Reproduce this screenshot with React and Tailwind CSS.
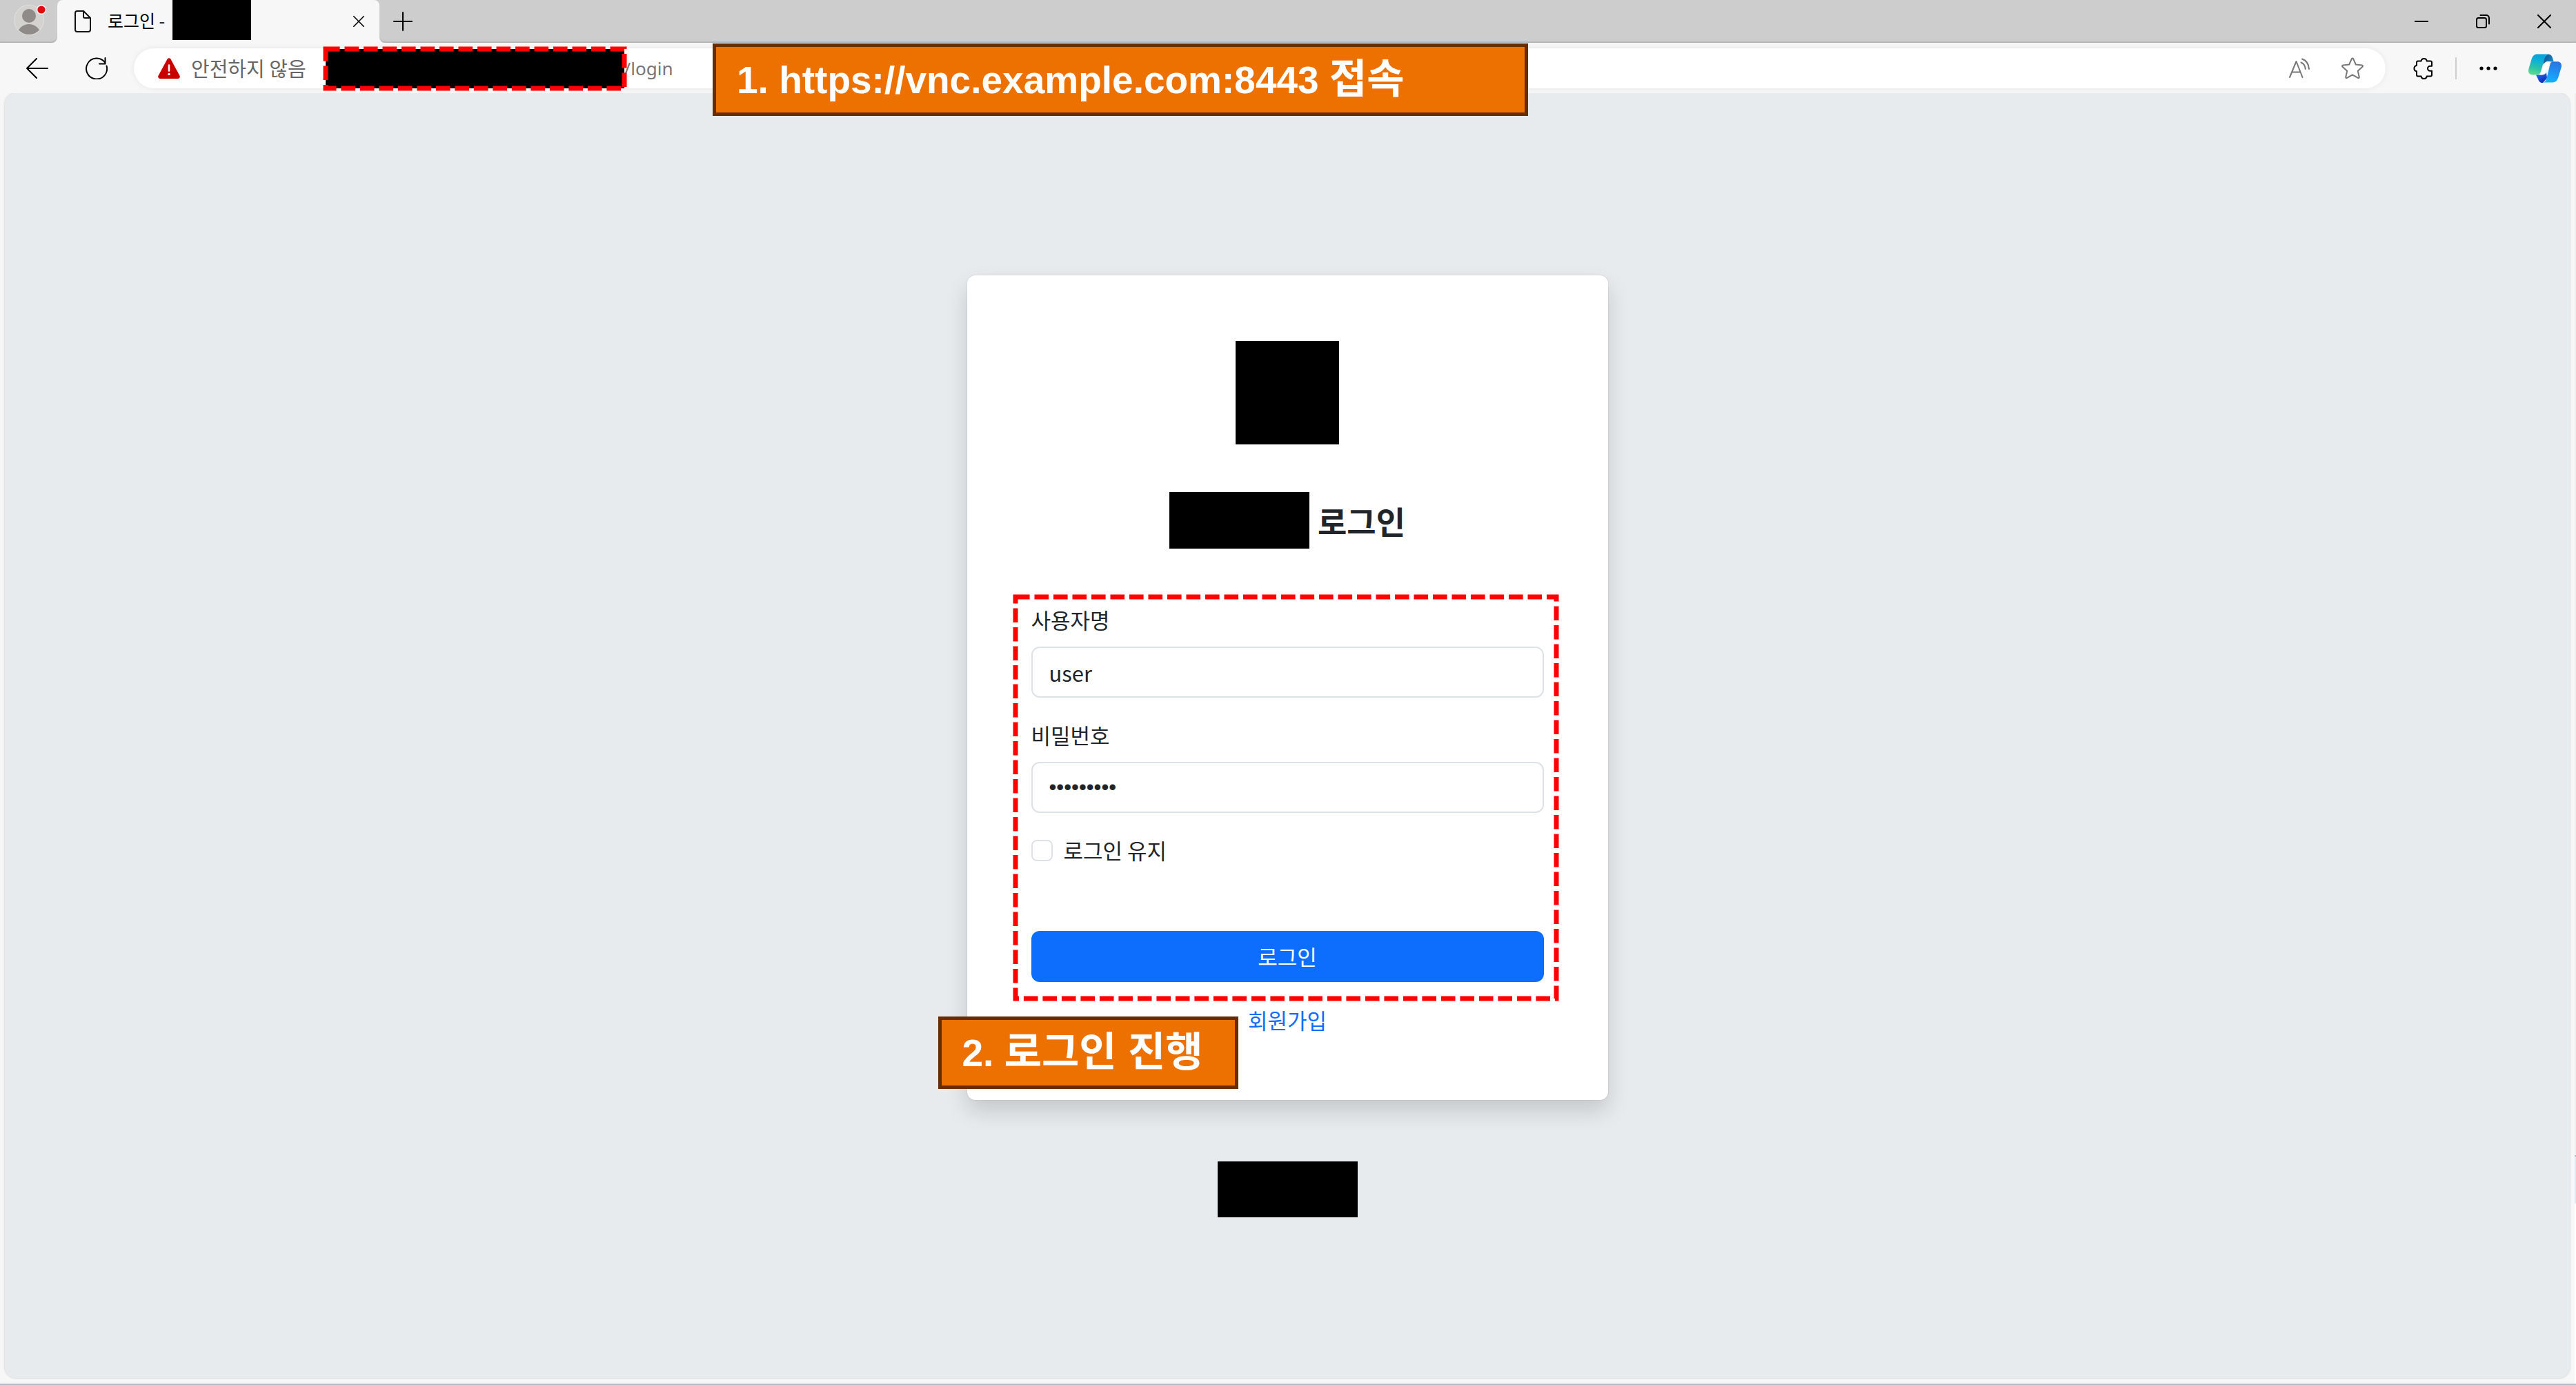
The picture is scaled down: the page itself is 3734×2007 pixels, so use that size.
import React from "react";

function Dashes() {
  return (
    <svg aria-hidden="true" className="pointer-events-none absolute inset-0 h-full w-full overflow-visible">
      <rect width="100%" height="100%" fill="none" stroke="#ff0000" strokeWidth="7" strokeDasharray="20.6 6.9" />
    </svg>
  );
}

function Callout({ className, children }) {
  return (
    <div
      className={
        "absolute z-10 flex h-[105px] items-center border-[5px] border-[#662d00] bg-[#ed7100] pl-[30px] font-['Liberation_Sans','Noto_Sans_CJK_KR',sans-serif] text-[55px] leading-none font-bold whitespace-nowrap text-white " +
        className
      }
    >
      <p>{children}</p>
    </div>
  );
}

function Profile() {
  return (
    <svg viewBox="0 0 48 48" className="size-12">
      <defs>
        <clipPath id="face"><circle cx="22" cy="26" r="21" /></clipPath>
      </defs>
      <circle cx="22" cy="26" r="21.5" fill="#d3d2ce" stroke="#e2e2e0" />
      <g clipPath="url(#face)" fill="#8f8b88">
        <circle cx="22" cy="20" r="10" />
        <ellipse cx="22" cy="48" rx="17" ry="16" />
      </g>
      <circle cx="40" cy="11" r="7" fill="#f3f3f3" />
      <circle cx="40" cy="11" r="5.6" fill="#e00b0b" />
    </svg>
  );
}

function DocIcon() {
  return (
    <svg viewBox="0 0 24 32" className="h-8 w-6" fill="none" stroke="#111" strokeWidth="2" strokeLinejoin="round">
      <path d="M4 1h9l10 10v17a3 3 0 0 1-3 3H4a3 3 0 0 1-3-3V4a3 3 0 0 1 3-3z" />
      <path d="M13 1v8a2 2 0 0 0 2 2h8" />
    </svg>
  );
}

function Cross({ className }) {
  return (
    <svg viewBox="0 0 20 20" className={className} stroke="#000" strokeWidth="2" strokeLinecap="round">
      <path d="M1 1l18 18M19 1L1 19" />
    </svg>
  );
}

function Copilot() {
  return (
    <svg viewBox="0 0 48 42" className="h-[42px] w-12">
      <defs>
        <linearGradient id="cpA" x1="0.5" y1="0" x2="0.25" y2="1">
          <stop offset="0" stopColor="#00a3dc" />
          <stop offset="0.3" stopColor="#0bb0d8" />
          <stop offset="0.7" stopColor="#2fc5a4" />
          <stop offset="1" stopColor="#5fde8c" />
        </linearGradient>
        <linearGradient id="cpB" x1="0.6" y1="0" x2="0.4" y2="1">
          <stop offset="0" stopColor="#2a75dd" />
          <stop offset="0.45" stopColor="#1f8ff2" />
          <stop offset="1" stopColor="#12b4ff" />
        </linearGradient>
        <linearGradient id="cpC" x1="0" y1="0" x2="1" y2="0.6">
          <stop offset="0" stopColor="#0c4d84" />
          <stop offset="1" stopColor="#1686cc" />
        </linearGradient>
        <linearGradient id="cpD" x1="0" y1="0" x2="0.5" y2="1">
          <stop offset="0" stopColor="#2a6df0" />
          <stop offset="1" stopColor="#0b2fc4" />
        </linearGradient>
      </defs>
      <path d="M28 0.500c5 0 6.500 3 7.500 7l1.200 3.800H29c-4 0-5.600 1.500-6.600 5L20 8z" fill="url(#cpC)" />
      <path d="M11 30.500h8c3.500 0 5.500-.8 7-3.500l1 8-6 7c-4 0-6-2-7-5.500z" fill="url(#cpD)" />
      <path d="M31 11.300L24.500 26c-1.500 3.200-3 4.500-7 4.500l5-15c1-3 2.500-4.200 5.500-4.200z" fill="#fff" />
      <path d="M13 0.500h17c-3.500 0-5.300 2.500-6.500 6.500l-4.800 16.500C17.500 28 16 30.500 12 30.500H6c-5 0-7-4-5.500-9L4.500 8C6 3 8.500 0.500 13 0.500z" fill="url(#cpA)" />
      <path d="M35 11.300h7c5 0 7 4 5.500 9l-4 13.200c-1.500 5-4 8-8.500 8H20c3.500 0 5.300-2.500 6.500-6.500l4-16c1.200-4.500 1.500-7.700 4.500-7.700z" fill="url(#cpB)" />
    </svg>
  );
}

function TitleBar() {
  return (
    <header className="flex h-[62px] bg-[#f7f7f7]">
      <div className="flex w-[83px] items-center rounded-br-lg bg-[#cdcdcd] pl-5 shadow-[inset_0_-3px_3px_-2px_rgba(0,0,0,0.2)]">
        <button aria-label="프로필" className="mb-2"><Profile /></button>
      </div>
      <div className="w-[467px] bg-[linear-gradient(#cdcdcd_50%,#f7f7f7_50%)]">
        <div className="flex h-full items-center rounded-t-lg bg-[#f7f7f7] pr-[22px] pl-[25px]">
          <DocIcon />
          <span className="ml-6 pb-1 text-[25px] leading-none text-black">로그인 -</span>
          <span className="ml-auto h-[58px] w-[114px] self-start bg-black" />
          <button aria-label="탭 닫기" className="ml-[148px]"><Cross className="size-4" /></button>
        </div>
      </div>
      <div className="flex flex-1 items-center rounded-bl-lg bg-[#cdcdcd] pr-9 pl-5 shadow-[inset_0_-3px_3px_-2px_rgba(0,0,0,0.2)]">
        <button aria-label="새 탭">
          <svg viewBox="0 0 28 28" className="size-7" stroke="#000" strokeWidth="2" strokeLinecap="round"><path d="M14 1v26M1 14h26" /></svg>
        </button>
        <div className="ml-auto flex items-center gap-[69px]">
          <button aria-label="최소화">
            <svg viewBox="0 0 20 20" className="size-5" stroke="#000" strokeWidth="2"><path d="M0 10h20" /></svg>
          </button>
          <button aria-label="이전 크기로">
            <svg viewBox="0 0 20 20" className="size-5" fill="none" stroke="#000" strokeWidth="2" strokeLinecap="round">
              <rect x="1" y="5" width="14" height="14" rx="2.500" />
              <path d="M6.500 1H15a4 4 0 0 1 4 4v8.500" />
            </svg>
          </button>
          <button aria-label="닫기"><Cross className="size-5" /></button>
        </div>
      </div>
    </header>
  );
}

function Toolbar() {
  return (
    <div className="relative flex h-[73px] items-center bg-[#f7f7f7] pr-[21px] pl-[38px]">
      <button aria-label="뒤로">
        <svg viewBox="0 0 32 30" className="h-[30px] w-8" fill="none" stroke="#000" strokeWidth="2" strokeLinecap="round" strokeLinejoin="round"><path d="M31 15H1M15 1L1 15l14 14" /></svg>
      </button>
      <button aria-label="새로 고침" className="ml-[54px]">
        <svg viewBox="0 0 32 32" className="size-8" fill="none" stroke="#000" strokeWidth="2" strokeLinecap="round" strokeLinejoin="round">
          <path d="M30.500 12.500A15 15 0 1 1 28 7.500M28.500 1v8.500H20" />
        </svg>
      </button>
      <div className="ml-[38px] flex h-[58px] flex-1 items-center rounded-full bg-white pr-8 pl-[35px] text-[#666] shadow-[0_0_8px_rgba(0,0,0,0.07)]">
        <svg viewBox="0 0 32 30" className="h-[30px] w-8">
          <path d="M13.600 1.500a2.800 2.800 0 0 1 4.800 0l13 24a3 3 0 0 1-2.600 4.500H3.200a3 3 0 0 1-2.600-4.500z" fill="#c80000" />
          <path d="M16 10.500v8" stroke="#fff" strokeWidth="2.600" strokeLinecap="round" />
          <circle cx="16" cy="23.500" r="1.700" fill="#fff" />
        </svg>
        <span className="ml-4 text-[29px] leading-none">안전하지 않음</span>
        <span className="relative ml-7 h-[57px] w-[433px] self-end bg-black"><Dashes /></span>
        <span className="font-['Noto_Sans',sans-serif] text-[26px] leading-none text-[#767676]">/login</span>
        <div className="ml-auto flex items-center gap-[46px] text-[#767676]">
          <button aria-label="소리내어 읽기">
            <svg viewBox="0 0 30 30" className="size-[30px]" fill="none" stroke="currentColor" strokeWidth="2" strokeLinecap="round" strokeLinejoin="round">
              <path d="M1 28L10.500 5l9 23M4.500 20.500h12" />
              <path d="M17.500 6.500c3.800 1.600 6 4.800 6.300 9.500M19 1.500c6 2 9.500 7.500 10 14.500" />
            </svg>
          </button>
          <button aria-label="즐겨찾기에 추가">
            <svg viewBox="0 0 32 32" className="size-8" fill="none" stroke="currentColor" strokeWidth="2" strokeLinejoin="round">
              <path d="M14.900 2.200a1.200 1.200 0 0 1 2.200 0l3.700 8.300 9 1.100a1.200 1.200 0 0 1 .7 2.100l-6.700 6 1.900 8.900a1.200 1.200 0 0 1-1.800 1.300L16 25.400l-7.900 4.500a1.200 1.200 0 0 1-1.800-1.300l1.900-8.900-6.700-6a1.200 1.200 0 0 1 .7-2.100l9-1.100z" />
            </svg>
          </button>
        </div>
      </div>
      <button aria-label="확장" className="ml-10">
        <svg viewBox="0 0 28 32" className="h-8 w-7" fill="none" stroke="#000" strokeWidth="2" strokeLinejoin="round">
          <path d="M7 5.500h4.500a4.200 4.200 0 0 1 8.300 0H25a2 2 0 0 1 2 2v5.300h-2.500a3.500 3.500 0 0 0 0 7H27v5.700a2 2 0 0 1-2 2h-5.200a4.200 4.200 0 0 1-8.300 0H7a2 2 0 0 1-2-2v-5.200a4.200 4.200 0 0 1 0-8.300V7.500a2 2 0 0 1 2-2z" />
        </svg>
      </button>
      <span className="ml-[33px] h-8 w-[2px] bg-[#cfcfcf]" />
      <button aria-label="설정 및 기타" className="ml-[33px]">
        <svg viewBox="0 0 26 6" className="h-1.5 w-[26px]"><circle cx="3" cy="3" r="2.600" /><circle cx="13" cy="3" r="2.600" /><circle cx="23" cy="3" r="2.600" /></svg>
      </button>
      <button aria-label="Copilot" className="ml-[45px]"><Copilot /></button>
      <Callout className="top-px left-[1033px] w-[1182px]">
        1. https://vnc.example.com:8443 <span className="text-[59px]">접속</span>
      </Callout>
    </div>
  );
}

function LoginCard() {
  const field =
    "mt-4 block h-[74px] w-full rounded-xl border-2 border-[#dee2e6] bg-white px-6 text-[31px] text-[#212529] outline-none";
  return (
    <section className="relative w-[929px] rounded-xl bg-white px-[93px] pt-[95px] pb-[93px] shadow-[0_16px_32px_rgba(0,0,0,0.15),0_0_0_1px_rgba(0,0,0,0.05)]">
      <div className="mx-auto size-[150px] bg-black" />
      <h1 className="mt-[69px] flex h-[82px] items-center justify-center gap-3 text-[46px] leading-none font-semibold">
        <span className="h-full w-[203px] bg-black" />
        로그인
      </h1>
      <form className="relative mt-20" onSubmit={(e) => e.preventDefault()}>
        <div className="absolute -top-[10px] right-[-18px] -bottom-6 -left-[23px]"><Dashes /></div>
        <label htmlFor="user" className="block leading-[46px]">사용자명</label>
        <input id="user" type="text" defaultValue="user" className={field} />
        <label htmlFor="pw" className="mt-[31px] block leading-[46px]">비밀번호</label>
        <input id="pw" type="password" defaultValue="password1" className={field + " font-['Liberation_Sans',sans-serif]"} />
        <div className="mt-[31px] flex h-[46px] items-center gap-4">
          <input id="keep" type="checkbox" className="size-[31px] appearance-none rounded-lg border-2 border-[#dee2e6] bg-white" />
          <label htmlFor="keep">로그인 유지</label>
        </div>
        <button type="submit" className="mt-[94px] block h-[74px] w-full rounded-xl bg-[#0d6efd] text-white">로그인</button>
      </form>
      <p className="mt-8 text-center leading-[46px]"><a href="#signup" className="text-[#0d6efd]">회원가입</a></p>
      <Callout className="bottom-4 -left-[42px] w-[435px]">
        2. <span className="text-[59px]">로그인 진행</span>
      </Callout>
    </section>
  );
}

export default function App() {
  return (
    <div className="flex min-h-screen flex-col bg-[#f7f7f7] font-['Noto_Sans_CJK_KR','Noto_Sans',sans-serif]">
      <TitleBar />
      <Toolbar />
      <div className="flex flex-1">
        <main className="mr-[7px] mb-2 ml-[7px] flex flex-1 flex-col items-center rounded-2xl bg-[#e7ebee] pt-[264px] text-[31px] text-[#212529] shadow-[0_0_2px_1px_rgba(0,0,0,0.1)]">
          <LoginCard />
          <div className="mt-[89px] h-[81px] w-[203px] bg-black" />
        </main>
        <div className="flex w-[2px] flex-col bg-[#f0f0f0]">
          <div className="mt-auto h-[70px] border-t-2 border-[#b5bac0] bg-[#dcecfb]" />
          <div className="h-[261px] bg-white" />
        </div>
      </div>
      <div className="h-[2px] bg-[#b5bac8]" />
    </div>
  );
}
